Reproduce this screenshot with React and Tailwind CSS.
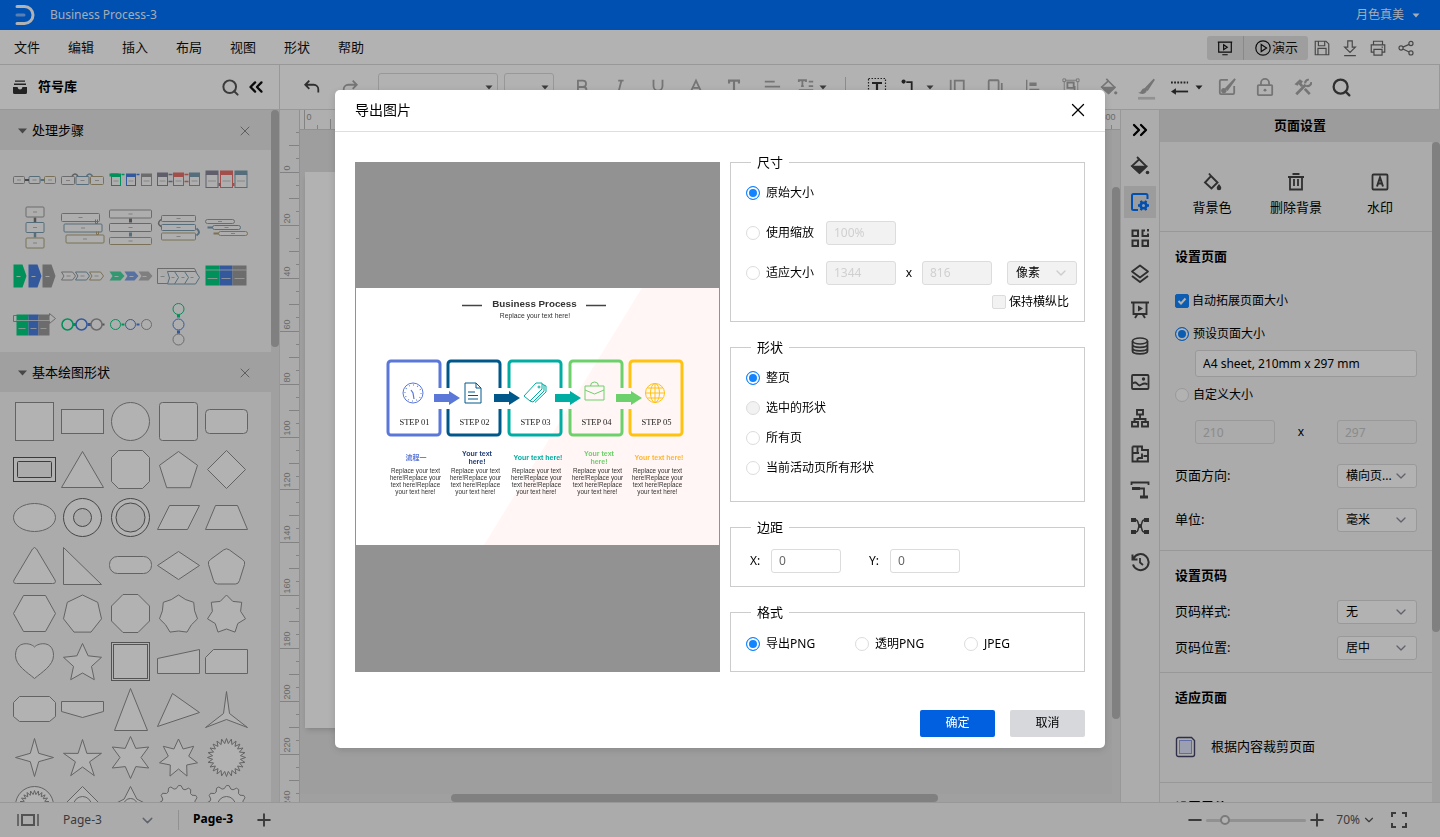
import { useState } from "react";
import { ChevronDown, ChevronsLeft, ChevronsRight, Search, X, Plus, Minus } from "lucide-react";

/* ---------- shape helpers ---------- */

const radial = (radii, cx = 24, cy = 24) =>
  radii
    .map((r, i) => {
      const a = (Math.PI * 2 * i) / radii.length - Math.PI / 2;
      return `${(cx + r * Math.cos(a)).toFixed(1)},${(cy + r * Math.sin(a)).toFixed(1)}`;
    })
    .join(" ");

const regular = (n, r, cy) => radial(Array(n).fill(r), 24, cy);

const star = (n, outer, inner, cy) =>
  radial(Array.from({ length: n * 2 }, (_, i) => (i % 2 ? inner : outer)), 24, cy);

const P = (points) => <polygon points={points} />;

const gear = radial(
  Array.from({ length: 48 }, (_, i) => (i % 4 < 2 ? 20 : 17))
);

const BASIC_SHAPES = [
  <rect x="5" y="5" width="38" height="38" />,
  <rect x="3" y="12" width="42" height="24" />,
  <circle cx="24" cy="24" r="19" />,
  <rect x="5" y="5" width="38" height="38" rx="3" />,
  <rect x="3" y="12" width="42" height="24" rx="4" />,

  <g stroke="#555"><rect x="3" y="12" width="42" height="24" /><rect x="7" y="16" width="34" height="16" rx="1" fill="#f5f5f5" /></g>,
  P("24,6 45,42 3,42"),
  P("12,5 36,5 43,12 43,36 36,43 12,43 5,36 5,12"),
  P(regular(5, 20, 26)),
  P("24,5 43,24 24,43 5,24"),

  <ellipse cx="24" cy="24" rx="21" ry="14" />,
  <g stroke="#666"><circle cx="24" cy="24" r="19" /><circle cx="24" cy="24" r="9" fill="#f5f5f5" /></g>,
  <g stroke="#666"><circle cx="24" cy="24" r="19" /><circle cx="24" cy="24" r="14.5" fill="#f5f5f5" /></g>,
  P("3,36 15,12 45,12 33,36"),
  P("3,36 13,12 35,12 45,36"),

  <path d="M22 7.500Q24 4.500 26 7.500L44.500 38.500Q46 42 42 42H6Q2 42 3.500 38.500Z" />,
  P("5,6 5,43 43,43"),
  <rect x="3" y="15" width="42" height="17" rx="8" />,
  P("24,10 45,24 24,38 3,24"),
  <path d="M21 8.500Q24 6 27 8.500L40 18Q43 20 42 23L37 39Q36 42.500 33 42.500H15Q12 42.500 11 39L6 23Q5 20 8 18Z" />,

  P("13,6 35,6 45,24 35,42 13,42 3,24"),
  P(regular(7, 19.5, 25)),
  P("16.500,5 31.500,5 43,16.500 43,31.500 31.500,43 16.500,43 5,31.500 5,16.500"),
  P(star(7, 19.5, 16.5, 25)),
  P(star(7, 19.5, 14.5, 25)),

  <path d="M24 9.500C28 5 43 3 43 18C43 28 31 35 24 41C17 35 5 28 5 18C5 3 20 5 24 9.500Z" />,
  P(star(5, 20, 9.5, 26)),
  <g stroke="#777"><rect x="5" y="5" width="38" height="38" /><rect x="7" y="7" width="34" height="34" /></g>,
  P("3,21 45,12 45,36 3,36"),
  P("3,20 11,12 45,12 45,36 3,36"),

  P("9,11 39,11 45,17 45,31 39,36 9,36 3,31 3,17"),
  P("3,16 45,16 45,26 24,32 3,26"),
  P("24,3 41,45 8,45"),
  P("18,8 45,27 3,41"),
  P("24,6 27,28 45,42 24,34 3,42 21,28"),

  P(star(4, 19, 6, 24)),
  P(star(5, 20, 7.5, 26)),
  P(star(6, 21, 10.5, 24)),
  P(star(7, 19.5, 10.5, 25)),
  P(star(24, 19, 14, 24)),

  <g><circle cx="24" cy="24" r="19" />{P(star(24, 15, 11, 24))}</g>,
  <g>{P("24,5 43,24 24,43 5,24")}<circle cx="24" cy="24" r="9" /></g>,
  <g>{P(star(4, 19, 9, 24))}<circle cx="24" cy="24" r="7" /></g>,
  P(gear),
  <g>{P(gear)}<circle cx="24" cy="24" r="9" /></g>,
];

const GREEN = "#00cf80";
const BLUE = "#4a80e0";
const GREY = "#9b9b9b";
const TEAL = "#7b9db0";
const SAND = "#b0a37b";
const PLUM = "#8c879b";
const RED = "#e8706c";

const Box = ({ x, y, w, h, c = GREY, rx = 1 }) => (
  <g>
    <rect x={x} y={y} width={w} height={h} rx={rx} stroke={c} fill="#fafafa" />
    <path d={`M${x + w / 2 - 2} ${y + h / 2}h4`} stroke="#999" strokeWidth="0.7" />
  </g>
);

const Card = ({ x, y, w, head, h, c, body = c }) => (
  <g>
    <rect x={x} y={y + head} width={w} height={h} stroke={body} fill="#fafafa" />
    <rect x={x - 0.5} y={y} width={w + 1} height={head} fill={c} />
    <path d={`M${x + 2} ${y + head + h / 2}h${w - 4}`} stroke="#aaa" strokeWidth="0.7" />
  </g>
);

const STEP_SHAPES = [
  <g><Box x={3} y={20} w={11} h={7} /><Box x={18.5} y={20} w={11} h={7} c={TEAL} /><Box x={34} y={20} w={11} h={7} c={SAND} /><path d="M14.500 23.500h4" stroke="#666" strokeWidth="2" /><path d="M30 23.500h4" stroke={TEAL} strokeWidth="2" /></g>,
  <g><path d="M14 21v-2q2.500-3 5 0v2" stroke="#888" strokeWidth="1.500" /><path d="M28.500 21v-2q2.500-3 5 0v2" stroke={TEAL} strokeWidth="1.500" /><Box x={3} y={20} w={13} h={8} /><Box x={17.500} y={20} w={13} h={8} c={TEAL} /><Box x={32} y={20} w={13} h={8} c={SAND} /></g>,
  <g><Card x={5} y={17} w={9} head={3} h={9} c={GREEN} /><Card x={20} y={17} w={9} head={3} h={9} c={BLUE} /><Card x={35} y={17} w={10} head={3} h={9} c={GREY} /><path d="M3 18.500h9" stroke={GREEN} strokeWidth="3" /><path d="M15 18h3" stroke={GREEN} strokeWidth="1.500" /><path d="M30 18h3" stroke={BLUE} strokeWidth="1.500" /></g>,
  <g><Card x={3} y={16} w={10} head={4} h={9} c={PLUM} /><Card x={19} y={16} w={10} head={4} h={9} c={RED} /><Card x={35} y={16} w={10} head={4} h={9} c={TEAL} /><path d="M14 18h4M14 25h4" stroke={PLUM} strokeWidth="1.500" /><path d="M30 18h4M30 25h4" stroke={RED} strokeWidth="1.500" /></g>,
  <g><Card x={3.500} y={14} w={12} head={4} h={13} c={PLUM} /><Card x={18} y={14} w={12} head={4} h={13} c={RED} /><Card x={32.500} y={14} w={12} head={4} h={13} c={TEAL} /><path d="M16 28h2" stroke={PLUM} strokeWidth="3" /><path d="M30 28h2" stroke={RED} strokeWidth="3" /></g>,

  <g><path d="M24.500 13v5" stroke="#777" strokeWidth="2.500" /><path d="M24.500 28v5" stroke={TEAL} strokeWidth="2.500" /><Box x={15.500} y={2.500} w={18} h={10} /><Box x={15.500} y={18} w={18} h={10} c={TEAL} /><Box x={15.500} y={33.500} w={18} h={10} c={SAND} /></g>,
  <g><Box x={3} y={9} w={38} h={8} /><Box x={5.500} y={19.500} w={38} h={8} c={TEAL} /><Box x={7.500} y={30.500} w={38} h={8} c={SAND} /><path d="M37 15v4h2v-4" stroke={TEAL} /><path d="M38 27v3h2v-3" stroke={SAND} /></g>,
  <g><Box x={3} y={5.500} w={42} h={8} /><Box x={3} y={19} w={42} h={8} c={TEAL} /><Box x={3} y={33} w={42} h={7} c={SAND} /><path d="M24 14v4" stroke="#777" strokeWidth="3" /><path d="M24 28v4" stroke={TEAL} strokeWidth="3" /></g>,
  <g><Box x={7} y={11} w={34} h={6} /><Box x={7} y={20} w={34} h={6} c={TEAL} /><Box x={7} y={28.500} w={34} h={7} c={SAND} /><path d="M6.500 15q-5 4 0 7" stroke="#888" strokeWidth="1.500" /><path d="M42 24q5 4 0 7" stroke={TEAL} strokeWidth="2" /></g>,
  <g><Box x={3} y={15} w={29} h={4} rx={2} /><Box x={10} y={21} w={28} h={4} c={TEAL} rx={2} /><Box x={16} y={27} w={29} h={4} c={SAND} rx={2} /><path d="M5 23h5" stroke={TEAL} strokeWidth="2" /><path d="M11 29h5" stroke={SAND} strokeWidth="2" /></g>,

  <g><path d="M3 12h9l4 11.500-4 11.500H3z" fill={GREEN} /><path d="M18 12h9l4 11.500-4 11.500h-9z" fill={BLUE} /><path d="M32 12h9l4 11.500-4 11.500h-9z" fill={GREY} /><path d="M6 24h4M21 24h4M35 24h4" stroke="#fff" strokeWidth="0.800" /></g>,
  <g fill="#fafafa"><path d="M3 19.500h11l3 4-3 4H3l2.500-4z" stroke={GREY} /><path d="M17 19.500h11l3 4-3 4H17l2.500-4z" stroke={TEAL} /><path d="M31 19.500h11l3 4-3 4H31l2.500-4z" stroke={SAND} /><path d="M8 23.500h4M22 23.500h4M36 23.500h4" stroke="#999" strokeWidth="0.700" /></g>,
  <g><path d="M3 19h11l4 4.500-4 4.500H3l3-4.500z" fill={GREEN} fillOpacity="0.700" /><path d="M18 19h10l4 4.500-4 4.500H18l3-4.500z" fill={BLUE} fillOpacity="0.700" /><path d="M32 19h10l4 4.500-4 4.500H32l3-4.500z" fill={GREY} fillOpacity="0.700" /><path d="M8 24h4M23 24h4M36 24h4" stroke="#fff" strokeWidth="0.800" /></g>,
  <g fill="#fafafa"><path d="M3 16h37l2 4" stroke={GREY} /><path d="M3 16v15h10" stroke={GREY} /><path d="M13 19h28l4 6-4 6.500H13l2-6z" stroke={TEAL} /><path d="M20 19l4 6-4 6.500M30 19l4 6-4 6.500" stroke={TEAL} /><path d="M6 24h4M17 25h3M27 25h3M36 25h3" stroke="#999" strokeWidth="0.700" /></g>,
  <g><path d="M3 13h14v20H3z" fill={GREEN} /><path d="M17 13h13v20H17z" fill={BLUE} /><path d="M30 13h14v20H30z" fill={GREY} /><path d="M3 17.500h41M5 26h10M19 26h9M32 26h10" stroke="#e4e4e4" strokeWidth="0.800" /></g>,

  <g><path d="M3 15h36v-2l6 5-6 5v-2H3z" stroke={GREY} fill="#fafafa" /><path d="M6 14h12v21H6z" fill={GREEN} /><path d="M18 14h10v21H18z" fill={BLUE} /><path d="M28 14h11v21H28z" fill={GREY} /><path d="M6 20h33M8 28h7M20 28h6M30 28h6" stroke="#e4e4e4" strokeWidth="0.800" /></g>,
  <g strokeWidth="1.500"><path d="M14 24h4" stroke={GREEN} strokeWidth="3" /><path d="M29 24h4" stroke={BLUE} strokeWidth="3" /><path d="M43 24h3" stroke="#777" strokeWidth="2" /><circle cx="9" cy="24" r="5.500" stroke={GREEN} fill="#fafafa" /><circle cx="23" cy="24" r="5.500" stroke={BLUE} fill="#fafafa" /><circle cx="38" cy="24" r="5.500" stroke={GREY} fill="#fafafa" /></g>,
  <g><circle cx="9" cy="24" r="5" stroke={GREEN} fill="#fafafa" /><circle cx="24" cy="24" r="5" stroke={BLUE} fill="#fafafa" /><circle cx="40" cy="24" r="5" stroke={GREY} fill="#fafafa" /><path d="M15 24h3" stroke={GREEN} strokeWidth="2" /><path d="M30 24h3" stroke={BLUE} strokeWidth="2" /></g>,
  <g><circle cx="24" cy="8.500" r="5.500" stroke={GREEN} fill="#fafafa" /><circle cx="24" cy="24" r="5.500" stroke={BLUE} fill="#fafafa" /><circle cx="24" cy="39" r="5.500" stroke={GREY} fill="#fafafa" /><path d="M24 14v3" stroke={GREEN} strokeWidth="3" /><path d="M24 30v3" stroke={BLUE} strokeWidth="3" /></g>,
];

/* ---------- icons ---------- */

const Icon = ({ size = 20, className = "", children, sw = 1.6 }) => (
  <svg width={size} height={size} viewBox="0 0 20 20" fill="none" stroke="currentColor" strokeWidth={sw} className={`shrink-0 ${className}`}>
    {children}
  </svg>
);

const Caret = ({ className = "" }) => (
  <svg width="8" height="5" viewBox="0 0 8 5" className={`shrink-0 ${className}`}>
    <path d="M0.500 0.500h7L4 4.500z" fill="currentColor" />
  </svg>
);

const bucket = (
  <>
    <path d="M7 1l2.500 2.500M9 3l7.500 7.500-7 6.500L2 10 9 3.500" strokeWidth="1.800" />
    <path d="M2.500 10.500h13.500l-6.500 6.500z" fill="currentColor" />
    <circle cx="17.500" cy="16.500" r="1.800" fill="currentColor" stroke="none" />
  </>
);

const TOOLS_LEFT = [
  { name: "加粗", d: <path d="M5.500 3h5.500a3.300 3.300 0 0 1 0 7H5.500zM5.500 10h6a3.400 3.400 0 0 1 0 7H5.500z" strokeWidth="2" /> },
  { name: "斜体", d: <path d="M8 3h6M5 17h6M11.500 3l-3.500 14" strokeWidth="2" /> },
  { name: "下划线", d: <path d="M5 2v7a5 5 0 0 0 10 0V2M3.500 18h13" strokeWidth="2" /> },
  { name: "字体颜色", d: <path d="M4.500 14.500L10 3l5.500 11.500M6.500 11h7M3 18h14" strokeWidth="2" /> },
  { name: "文字", d: <path d="M4.500 6V3h11v3M10 3v12M7.500 15h5" strokeWidth="2.400" /> },
  { name: "对齐", d: <path d="M2 4h11M2 9.500h17M2 15h11" strokeWidth="2" /> },
];

const TOOLS_RIGHT = [
  { name: "分布", d: <><path d="M3 2v16" strokeWidth="2" /><path d="M7.500 3h10v13h-10z" strokeWidth="2" /></> },
  { name: "图层", d: <><rect x="3" y="2.500" width="11" height="12" rx="1" strokeWidth="2" /><path d="M17.500 5.500v12H7" strokeWidth="2" /></> },
  { name: "对齐形状", d: <><path d="M3 2v16" strokeWidth="1.500" /><path d="M6 7h8M6 14h11" strokeWidth="4" /></> },
  { name: "组合", d: <><path d="M2.500 2.500h15v15h-15z" strokeWidth="1" /><path d="M1 1h3v3H1zM16 1h3v3h-3zM1 16h3v3H1zM16 16h3v3h-3z" strokeWidth="1" fill="#fff" /><path d="M6 5h7v6H6zM14 9v5H9" strokeWidth="2" /></> },
  { name: "填充", d: bucket },
  { name: "线条颜色", d: <><path d="M18 1.500L8.500 11.500M18 1.500l-7.500 11.500-2-1.500z" strokeWidth="2" /><path d="M7.500 12c-4 0-2 3.500-5 4.500 3 1 6.500 0 6.500-3z" fill="currentColor" strokeWidth="1.500" /><path d="M0 22.500h19" stroke="#d0d0d0" strokeWidth="3" /></> },
];

const SIDE_ICONS = [
  { name: "填充样式", d: bucket },
  { name: "页面设置", active: true, d: <><path d="M8 18H3.500A1.500 1.500 0 0 1 2 16.500v-13A1.500 1.500 0 0 1 3.500 2H16a1.500 1.500 0 0 1 1.500 1.500V7" strokeWidth="2" /><circle cx="13.500" cy="13.500" r="2.800" strokeWidth="2.600" /><path d="M8 13.500h2.500M16.500 13.500H19M10.800 8.800l1.200 2.200M15 16l1.200 2.200M16.200 8.800L15 11M12 16l-1.200 2.200" strokeWidth="2.400" /></> },
  { name: "符号", d: <><path d="M2.500 2.500h5.500v5.500H2.500zM2.500 12.500h5.500V18H2.500zM12.500 12.500H18V18h-5.500zM15 2.500h-2.500v5.500H18V5.500M18 1v2.500" strokeWidth="2" /></> },
  { name: "图层", d: <><path d="M10 1.500l8 6-8 6-8-6z" strokeLinejoin="round" strokeWidth="1.800" /><path d="M2 12l8 6 8-6" strokeLinejoin="round" strokeWidth="2" /></> },
  { name: "演示", d: <><path d="M1 2.500h18M3.500 3v11h13V3M7.500 14l-2.500 4M12.500 14l2.500 4" strokeWidth="1.900" /><path d="M8 5.500l5 3-5 3z" fill="currentColor" stroke="none" /></> },
  { name: "数据", d: <><ellipse cx="10" cy="5" rx="7.500" ry="3" /><path d="M2.500 5v10c0 3.800 15 3.800 15 0V5M2.500 8.500c0 3.800 15 3.800 15 0M2.500 12c0 3.800 15 3.800 15 0" strokeWidth="1.800" /></> },
  { name: "图片", d: <><rect x="2" y="3" width="16.500" height="14" rx="1" strokeWidth="1.800" /><path d="M3 11.500c3-3 4 1 6.500 2 2 0 4-4 8-1" strokeWidth="1.800" /><circle cx="13.500" cy="7" r="1.700" fill="currentColor" stroke="none" /></> },
  { name: "组织结构", d: <><path d="M7 2h6v4.500H7zM2 14h6v4.500H2zM12 14h6v4.500h-6zM10 7v4M4.500 14v-3h11v3" strokeWidth="1.900" /></> },
  { name: "平面图", d: <path d="M7.500 8V3M2.500 2.500v15h15.500V6H12V2.500H2.500M2 9h7M12 9.500V14H7.500M13.500 12H18M7.500 14v3" strokeWidth="1.900" /> },
  { name: "甘特图", d: <><path d="M1.500 5V2.500h17V5" strokeWidth="1.800" /><path d="M2 8.500h8M10 17h8" strokeWidth="3" /><path d="M9 8.500h5V17" strokeWidth="1.800" /></> },
  { name: "思维导图", d: <><path d="M4 4h2c3 0 1.500 6 4 6s1-6 4-6h2M4 16h2c3 0 1.500-6 4-6s1 6 4 6h2" strokeWidth="1.500" /><path d="M1 4h5M14 4h5M1 16h5M14 16h5" strokeWidth="4" /><circle cx="10" cy="10" r="2" fill="currentColor" stroke="none" /></> },
  { name: "历史", d: <><path d="M3.500 6.500a8 8 0 1 1-.500 6M2.500 2.500v5h5" strokeWidth="2" /><path d="M10 6v4.500l3 2.500" strokeWidth="1.800" /></> },
];

/* ---------- small controls ---------- */

const Radio = ({ name, label, checked, disabled, className = "" }) => (
  <label className={`flex items-center text-xs text-black ${className}`}>
    <input
      type="radio"
      name={name}
      defaultChecked={checked}
      disabled={disabled}
      className="appearance-none w-3.5 h-3.5 shrink-0 rounded-full border border-[#dcdcdc] bg-white checked:border-[#1284ff] checked:bg-[#1284ff] checked:shadow-[inset_0_0_0_2px_#fff] disabled:bg-[#f2f2f2]"
    />
    {label}
  </label>
);

const Checkbox = ({ label, checked, disabled }) => (
  <label className="flex items-center gap-[3px] text-xs text-black">
    <span className="relative flex">
      <input
        type="checkbox"
        defaultChecked={checked}
        disabled={disabled}
        className="peer appearance-none w-3.5 h-3.5 rounded-xs border border-[#dcdcdc] bg-white checked:bg-[#1284ff] checked:border-[#1284ff] disabled:bg-[#f2f2f2]"
      />
      <svg viewBox="0 0 14 14" className="absolute inset-0 hidden peer-checked:block pointer-events-none" fill="none" stroke="#fff" strokeWidth="2">
        <path d="M3.500 7l2.500 2.500L10.500 4.500" />
      </svg>
    </span>
    {label}
  </label>
);

const TextBox = ({ label, value, disabled, className }) => (
  <input
    type="text"
    aria-label={label}
    defaultValue={value}
    disabled={disabled}
    className={`rounded-[3px] border border-[#dcdcdc] px-[7px] text-xs outline-none ${className}`}
  />
);

const Select = ({ id, label, value, disabled, className }) => (
  <span className={`relative flex items-center ${className}`}>
    <select
      id={id}
      aria-label={label}
      disabled={disabled}
      className="appearance-none w-full h-full rounded-[3px] border border-[#dcdcdc] bg-white pl-2 pr-6 text-xs text-black opacity-100 outline-none disabled:bg-[#f2f2f2]"
    >
      <option>{value}</option>
    </select>
    <ChevronDown size={16} strokeWidth={2} className={`absolute right-2 pointer-events-none ${disabled ? "text-[#ccc]" : "text-[#8a8f9c]"}`} />
  </span>
);

/* ---------- top bars ---------- */

const TitleBar = () => (
  <header className="flex items-center h-[30px] shrink-0 bg-[#0073ff] pl-[14px] pr-5 text-white/95">
    <svg width="22" height="22" viewBox="0 0 22 22" fill="none" strokeLinecap="round" className="mr-3.5">
      <path d="M3 2.500h7.500a8.500 8.500 0 0 1 0 17H3" stroke="#fff" strokeWidth="3" />
      <path d="M3 11h7" stroke="#82b8ff" strokeWidth="3" />
    </svg>
    <h1 className="text-xs">Business Process-3</h1>
    <button className="ml-auto flex items-center gap-2 text-xs">
      月色真美
      <Caret />
    </button>
  </header>
);

const MENU = ["文件", "编辑", "插入", "布局", "视图", "形状", "帮助"];

const MenuBar = () => (
  <nav className="flex items-center h-[35px] shrink-0 pt-px bg-white border-b border-[#dadada] text-[13px] text-[#111]">
    {MENU.map((m) => (
      <button key={m} className="px-3.5">{m}</button>
    ))}
    <div className="ml-auto flex items-center pr-5 text-[#666]">
      <div className="flex h-6 rounded-[3px] bg-[#e2e2e2] text-[#111]">
        <button aria-label="幻灯片" className="flex items-center justify-center w-[37px] border-r border-[#c4c4c4]">
          <Icon size={18} sw={1.3}><path d="M2 3.500h16M3 4v10.500h14V4M7 17.500h6" /><path d="M8.500 6.500l4 2.700-4 2.700z" /></Icon>
        </button>
        <button className="flex items-center justify-center w-[64px] text-[13px]">
          <Icon size={18} sw={1.3}><circle cx="10" cy="10" r="8" /><path d="M8 6l6 4-6 4z" /></Icon>
          演示
        </button>
      </div>
      <button aria-label="保存" className="flex justify-center w-7">
        <Icon size={18} sw={1.3}><path d="M2.500 2.500h12l3 3v12h-15zM6 2.500v5h7v-5M5.500 17.500v-7h9v7" /></Icon>
      </button>
      <button aria-label="下载" className="flex justify-center w-7">
        <Icon size={18} sw={1.3}><path d="M7.500 2h5v7h3.500l-6 6-6-6h3.500zM3.500 18.500h13" /></Icon>
      </button>
      <button aria-label="打印" className="flex justify-center w-7">
        <Icon size={18} sw={1.3}><path d="M5 6V2.500h10V6M5 14.500H2.500V6.500h15v8H15M5.500 11.500h9v6.500h-9zM14 9h1.500" /></Icon>
      </button>
      <button aria-label="分享" className="flex justify-center w-7">
        <Icon size={18} sw={1.3}><circle cx="4.500" cy="10" r="2.300" /><circle cx="15.500" cy="5" r="2.300" /><circle cx="15.500" cy="15.500" r="2.300" /><path d="M6.500 9l7-3M6.500 11l7 3.500" /></Icon>
      </button>
    </div>
  </nav>
);

const ToolBar = () => (
  <div className="flex h-[45px] shrink-0 bg-white border-b border-[#dadada]">
    <div className="flex items-center w-[280px] shrink-0 border-r border-[#dadada] pl-3 pr-3">
      <svg width="16" height="16" viewBox="0 0 16 16" className="text-[#333]" fill="currentColor">
        <path d="M3 1.500h10v1.300H3zM2 4.500h12v1.500H2z" />
        <path d="M1 8h4.500q.500 2.500 2.500 2.500T10.500 8H15v5.500q0 1.500-1.500 1.500h-11Q1 15 1 13.500z" />
      </svg>
      <h2 className="ml-2.5 text-[13px] font-bold text-black">符号库</h2>
      <button aria-label="搜索符号" className="ml-auto text-[#555]"><Search size={19} strokeWidth={2.500} /></button>
      <button aria-label="收起" className="ml-[5px] text-[#111]"><ChevronsLeft size={22} strokeWidth={2.500} /></button>
    </div>
    <div className="flex flex-1 min-w-0 items-center pl-[13px] text-[#a8a8a8] border-r border-[#dadada]">
      <button aria-label="撤销" className="flex justify-center w-[38px] text-[#444]">
        <Icon size={18} sw={2}><path d="M7 3L2.500 7.500 7 12M3 7.500h9a5 5 0 0 1 5 5V16" /></Icon>
      </button>
      <button aria-label="重做" className="flex justify-center w-[38px]">
        <Icon size={18} sw={2}><path d="M13 3l4.500 4.500L13 12M17 7.500H8a5 5 0 0 0-5 5V16" /></Icon>
      </button>
      <button aria-label="字体" className="flex items-center justify-end w-[120px] h-7 ml-[9px] mr-1.5 pr-1 rounded-[3px] border border-[#dadada] text-[#555]"><Caret /></button>
      <button aria-label="字号" className="flex items-center justify-end w-[50px] h-7 mr-[9px] pr-1 rounded-[3px] border border-[#dadada] text-[#555]"><Caret /></button>
      {TOOLS_LEFT.map((t) => (
        <button key={t.name} aria-label={t.name} className="flex justify-center w-[38px]"><Icon size={18}>{t.d}</Icon></button>
      ))}
      <button aria-label="行距" className="flex items-center justify-center w-[42px] gap-1">
        <Icon size={18} sw={2}><path d="M2 4.500V2.500h8v2M6 2.500v7M4.500 9h3M13 4h5M13 9h5M2 13.500h16M2 17.500h16" /></Icon>
        <Caret className="text-[#555]" />
      </button>
      <span className="w-px h-5 mx-3 bg-[#c8c8c8]" />
      <button aria-label="文本框" className="flex justify-center w-[38px] text-[#333]">
        <Icon size={20} sw={2.200}><rect x="1.500" y="1.500" width="17" height="17" strokeDasharray="1.500 1.500" strokeWidth="1.200" /><path d="M5 6h10M10 6v9" /></Icon>
      </button>
      <button aria-label="连接线" className="flex items-center justify-center w-[42px] gap-2 text-[#333]">
        <Icon size={18} sw={2}><circle cx="4" cy="4" r="2.300" fill="currentColor" stroke="none" /><path d="M7 4.500h6v11h4" /></Icon>
        <Caret className="text-[#555]" />
      </button>
      {TOOLS_RIGHT.map((t) => (
        <button key={t.name} aria-label={t.name} className="flex justify-center w-[38px]"><Icon size={18} className="overflow-visible">{t.d}</Icon></button>
      ))}
      <button aria-label="线型" className="flex items-center justify-center w-[42px] gap-1.5 text-[#333]">
        <Icon size={18} className="overflow-visible"><path d="M0 5h19" strokeDasharray="2 1.500" strokeWidth="2" /><path d="M4 15h15" strokeWidth="2" /><path d="M5.500 11.500v7L0 15z" fill="currentColor" stroke="none" /></Icon>
        <Caret />
      </button>
      <button aria-label="编辑样式" className="flex justify-center w-[38px]">
        <Icon size={18} sw={2}><path d="M11 2H3.500A1.500 1.500 0 0 0 2 3.500v13A1.500 1.500 0 0 0 3.500 18h13a1.500 1.500 0 0 0 1.500-1.500V9" /><path d="M19 1L9 11.500l1.500 1.500z" fill="currentColor" /><circle cx="6.500" cy="14" r="3" fill="currentColor" stroke="none" /></Icon>
      </button>
      <button aria-label="锁定" className="flex justify-center w-[38px]">
        <Icon size={18} sw={2}><rect x="2" y="8" width="16" height="11" rx="1" /><path d="M5.500 8V5.500a4.500 4.500 0 0 1 9 0V8" /><circle cx="10" cy="13.500" r="1.600" fill="currentColor" stroke="none" /></Icon>
      </button>
      <button aria-label="工具" className="flex justify-center w-[38px]">
        <Icon size={18} sw={3}><path d="M2.500 18L13 7.500M6 5.500L9 9M12 12l5.500 6" /><path d="M0.500 7l6-5.500L10 4 8 6 6.500 5 4 8.500z" fill="currentColor" stroke="none" /><path d="M12.500 6a3.500 3.500 0 0 1 4-4M19 4.500a3.800 3.800 0 0 1-5.500 4" strokeWidth="2.400" /></Icon>
      </button>
      <button aria-label="搜索" className="flex justify-center w-[38px] text-[#444]"><Search size={21} strokeWidth={2.600} /></button>
    </div>
  </div>
);

/* ---------- left library ---------- */

const ShapeGroup = ({ title, shapes, className, stroke }) => (
  <section>
    <div className="flex items-center h-10 pt-px bg-[#e5e5e5] pl-[18px] pr-[18px] text-[13px] text-black">
      <svg width="9" height="6" viewBox="0 0 9 6" className="mr-[5px] text-[#666]"><path d="M0 0.500h9L4.500 5.500z" fill="currentColor" /></svg>
      <h3>{title}</h3>
      <button aria-label="关闭" className="ml-auto text-[#888]"><X size={16} strokeWidth={1.500} /></button>
    </div>
    <div className={`flex flex-wrap pl-2.5 ${className}`}>
      {shapes.map((s, i) => (
        <svg key={i} viewBox="-0.5 -0.5 48 48" className="w-12 h-12" fill={stroke ? "#fff" : "none"} stroke={stroke} strokeWidth="1">{s}</svg>
      ))}
    </div>
  </section>
);

const Library = () => (
  <aside className="flex w-[280px] shrink-0 border-r border-[#dadada] bg-[#f5f5f5]">
    <div className="flex-1 overflow-hidden">
      <ShapeGroup title="处理步骤" shapes={STEP_SHAPES} className="pt-1.5 pb-1" />
      <ShapeGroup title="基本绘图形状" shapes={BASIC_SHAPES} className="pt-[5px]" stroke="#8f8f8f" />
    </div>
    <div className="w-2 bg-[#e6e6e6]"><div className="h-[237px] rounded bg-[#b8b8b8]" /></div>
  </aside>
);

/* ---------- canvas ---------- */

const UNIT = 52.9;
const VRuler = () => (
  <svg width="20" height="692" className="shrink-0 h-full" fontFamily="Liberation Sans, Arial, sans-serif" fontSize="9" fill="#999">
    {Array.from({ length: 14 }, (_, i) => {
      const y = Math.round(62 + (i - 1) * UNIT) + 0.5;
      return (
        <g key={i} stroke="#bbb">
          {i > 0 && <path d={`M0 ${y}h20`} />}
          <path d={`M16 ${y + 13}h4M9 ${y + 26}h11M16 ${y + 39}h4`} />
          {i > 0 && <text stroke="none" transform={`translate(10 ${y - 2}) rotate(-90)`}>{(i - 1) * 20}</text>}
        </g>
      );
    })}
  </svg>
);

const HRuler = () => (
  <svg width="820" height="19" className="block" fontFamily="Liberation Sans, Arial, sans-serif" fontSize="9" fill="#999">
    {Array.from({ length: 16 }, (_, i) => {
      const x = Math.round(4 + i * UNIT) + 0.5;
      return (
        <g key={i} stroke="#bbb">
          <path d={`M${x} 0v19M${x + 13} 15v4M${x + 26} 9v10M${x + 39} 15v4`} />
          {i % 3 === 0 && <text x={x + 2} y="10" stroke="none">{i * 20}</text>}
        </g>
      );
    })}
  </svg>
);

const Canvas = () => (
  <main className="flex flex-1 min-w-0 overflow-hidden">
    <div className="w-5 shrink-0 overflow-hidden bg-[#f5f5f5] border-r border-[#d0d0d0]"><VRuler /></div>
    <div className="flex flex-col flex-1 min-w-0">
      <div className="h-5 shrink-0 overflow-hidden bg-[#fbfbfb] border-b border-[#d0d0d0]"><HRuler /></div>
      <div className="flex flex-1 min-h-0">
        <div className="flex-1 overflow-hidden bg-[#e3e3e3] pt-[42px] pl-[5px] pr-5">
          <div className="h-[556px] bg-white shadow-md" />
        </div>
        <div className="w-2 shrink-0 bg-[#e6e6e6] pt-[57px]"><div className="h-[532px] rounded bg-[#b8b8b8]" /></div>
      </div>
      <div className="h-2 shrink-0 bg-[#e6e6e6] pl-[151px]"><div className="w-[487px] h-2 rounded bg-[#b8b8b8]" /></div>
    </div>
  </main>
);

const SideStrip = () => (
  <div className="flex flex-col items-center gap-1 w-10 shrink-0 pt-1 bg-[#f7f7f7] border-x border-[#dadada] text-[#444]">
    <button aria-label="展开" className="flex items-center justify-center w-8 h-8 shrink-0 text-black"><ChevronsRight size={24} strokeWidth={2.300} /></button>
    {SIDE_ICONS.map((s) => (
      <button key={s.name} aria-label={s.name} className={`flex items-center justify-center w-8 h-8 shrink-0 ${s.active ? "bg-[#e0e0e0] text-[#0073ff]" : ""}`}>
        <Icon>{s.d}</Icon>
      </button>
    ))}
  </div>
);

/* ---------- right panel ---------- */

const PAGE_ACTIONS = [
  { name: "背景色", d: <><path d="M7 1.500l2 2.500M9 4l6.500 6.500-6 6L3 10.500z" strokeWidth="1.900" /><path d="M17 12c1.500 2 2.300 2.800 2.300 4a2.300 2.300 0 0 1-4.600 0c0-1.200.800-2 2.300-4z" fill="currentColor" stroke="none" /></> },
  { name: "删除背景", d: <path d="M6.500 2h7M2 5h16M4 5v12.500h12V5M8 7v7M12 7v7" strokeWidth="1.800" /> },
  { name: "水印", d: <><rect x="2.500" y="2.500" width="15" height="15" rx="1" strokeWidth="1.800" /><path d="M7 14.500l3-9 3 9M8 11.500h4" strokeWidth="2" /></> },
];

const Row = ({ id, label, value }) => (
  <div className="flex items-center justify-between h-6">
    <label htmlFor={id} className="text-[13px] text-black">{label}:</label>
    <Select id={id} value={value} className="w-20 h-6" />
  </div>
);

const PageSettings = () => (
  <aside className="flex flex-col w-[280px] shrink-0 bg-[#f5f5f5]">
    <h2 className="flex items-center justify-center h-8 shrink-0 bg-[#e0e0e0] text-[13px] font-bold text-black">页面设置</h2>
    <div className="flex flex-1 min-h-0">
      <div className="flex-1 overflow-hidden">
        <div className="flex h-[90px] px-2.5 pt-[30px] border-b border-[#dadada]">
          {PAGE_ACTIONS.map((a) => (
            <button key={a.name} className="flex flex-col items-center gap-[5px] flex-1 text-[13px] leading-5 text-black">
              <Icon className="text-[#444]">{a.d}</Icon>
              {a.name}
            </button>
          ))}
        </div>
        <section className="px-[15px] pt-3.5 pb-[18px] border-b border-[#dadada]">
          <h3 className="h-5 text-[13px] leading-5 font-bold text-black">设置页面</h3>
          <div className="flex items-center h-[34px] mt-[18px]"><Checkbox label="自动拓展页面大小" checked /></div>
          <Radio name="page-size" label="预设页面大小" checked className="gap-1 h-8" />
          <TextBox label="预设尺寸" value="A4 sheet, 210mm x 297 mm" className="block w-[222px] h-[27px] ml-5 bg-white text-black" />
          <Radio name="page-size" label="自定义大小" className="gap-1 h-9" />
          <div className="flex items-center pl-5 mt-[7px] text-xs text-black">
            <TextBox label="宽" value="210" disabled className="w-20 h-6 text-[#c8c8c8]" />
            <span className="w-[52px] text-center">x</span>
            <TextBox label="高" value="297" disabled className="w-20 h-6 ml-auto text-[#c8c8c8]" />
          </div>
          <div className="flex flex-col gap-5 mt-5">
            <Row id="page-dir" label="页面方向" value="横向页..." />
            <Row id="page-unit" label="单位" value="毫米" />
          </div>
        </section>
        <section className="px-[15px] pt-3.5 pb-3 border-b border-[#dadada]">
          <h3 className="h-5 text-[13px] leading-5 font-bold text-black">设置页码</h3>
          <div className="flex flex-col gap-3 mt-[15px]">
            <Row id="num-style" label="页码样式" value="无" />
            <Row id="num-pos" label="页码位置" value="居中" />
          </div>
        </section>
        <section className="px-[15px] pt-3.5 pb-[15px] border-b border-[#dadada]">
          <h3 className="h-5 text-[13px] leading-5 font-bold text-black">适应页面</h3>
          <button className="flex items-center gap-[15px] h-10 mt-5 text-[13px] text-black">
            <svg width="21" height="22" viewBox="0 0 21 22" fill="none">
              <path d="M3.500 1.500h13l3 3v14a2 2 0 0 1-2 2h-14a2 2 0 0 1-2-2v-15a2 2 0 0 1 2-2z" stroke="#44446a" strokeWidth="1.400" />
              <rect x="4.500" y="4.500" width="12" height="13" fill="#dfe4fb" stroke="#2a4be0" strokeDasharray="1 1" />
            </svg>
            根据内容裁剪页面
          </button>
        </section>
        <h3 className="px-[15px] pt-3.5 text-[13px] leading-5 font-bold text-black">设置零件</h3>
      </div>
      <div className="w-2 shrink-0 bg-[#e6e6e6]"><div className="h-[490px] rounded bg-[#b8b8b8]" /></div>
    </div>
  </aside>
);

/* ---------- footer ---------- */

const Footer = () => (
  <footer className="flex items-center h-[35px] shrink-0 bg-[#f5f5f5] border-t border-[#dadada] pl-4 pr-[31px] text-xs text-[#555]">
    <svg width="24" height="14" viewBox="0 0 24 14" fill="none" stroke="#777" className="mr-[23px]">
      <rect x="6" y="2" width="12" height="10" strokeWidth="2" /><path d="M2 1v12M22 1v12" strokeWidth="1.500" />
    </svg>
    <span className="w-[76px]">Page-3</span>
    <button aria-label="页面列表" className="text-[#8a8f9c]"><ChevronDown size={17} /></button>
    <span className="w-px h-5 ml-[22px] mr-3.5 bg-[#d0d0d0]" />
    <button className="font-bold text-black mb-0.5">Page-3</button>
    <button aria-label="新建页面" className="ml-[21px] text-[#555]"><Plus size={20} strokeWidth={2.300} /></button>
    <div className="ml-auto flex items-center">
      <button aria-label="缩小"><Minus size={20} strokeWidth={2.300} /></button>
      <input
        type="range"
        aria-label="缩放"
        defaultValue="15"
        className="appearance-none w-[100px] h-[3px] mx-px rounded bg-[#d0d0d0] [&::-webkit-slider-thumb]:appearance-none [&::-webkit-slider-thumb]:w-2.5 [&::-webkit-slider-thumb]:h-2.5 [&::-webkit-slider-thumb]:rounded-full [&::-webkit-slider-thumb]:border-2 [&::-webkit-slider-thumb]:border-[#b0b0b0] [&::-webkit-slider-thumb]:bg-white"
      />
      <button aria-label="放大"><Plus size={20} strokeWidth={2.300} /></button>
      <button className="flex items-center gap-0.5 ml-[9px]">70%<ChevronDown size={14} /></button>
      <button aria-label="全屏" className="ml-[13px]">
        <Icon size={20} sw={2}><path d="M3 7V3h4M13 3h4v4M17 13v4h-4M7 17H3v-4" /></Icon>
      </button>
    </div>
  </footer>
);

/* ---------- export dialog ---------- */

const STEPS = [
  { x: 32, color: "#5b78d8", title: ["流程一"] },
  { x: 92, color: "#00588a", title: ["Your text", "here!"], titleColor: "#24407c" },
  { x: 153, color: "#00ada2", title: ["Your text here!"] },
  { x: 214, color: "#6cd16a", title: ["Your text", "here!"] },
  { x: 274, color: "#ffc20e", title: ["Your text here!"], titleColor: "#ffb62e" },
];

const STEP_ICONS = [
  <g><circle cx="10" cy="10" r="10" /><circle cx="10" cy="10" r="8" strokeWidth="1.500" strokeDasharray="0.700 3.490" /><path d="M8 7l2 3 1 6" strokeWidth="1.200" /></g>,
  <g><path d="M2 0h11l5 5v15H2zM13 0v5h5M5 9h7M5 12.500h10M5 16h10" /></g>,
  <g><path d="M12 0h6v6L6 18l-6-5z" /><path d="M18 1l2 1v6L9 19l-3-1M20 2l2 1v6L11 19.500" /><circle cx="15" cy="4" r="1" /></g>,
  <g><path d="M0 3h19v14H0zM5.500 3q0-4 4-4t4 4M0 7l9.500 4L19 7" /></g>,
  <g><circle cx="10" cy="10" r="9.500" /><ellipse cx="10" cy="10" rx="4.500" ry="9.500" /><path d="M.500 10h19M10 .500v19M2.500 5h15M2.500 15h15" /></g>,
];

const BODY = ["Replace your text", "here!Replace your", "text here!Replace", "your text here!"];

const Preview = () => (
  <svg viewBox="0 0 363 257" className="w-full bg-white" fill="none" fontFamily="Liberation Sans, Arial, Noto Sans CJK SC, sans-serif">
    <path d="M286 0H363V257H128z" fill="#fff6f5" />
    <path d="M106 17.500h20M230 17.500h20" stroke="#444" strokeWidth="1.500" />
    <text x="178.500" y="19" textAnchor="middle" fontSize="9.800" fontWeight="bold" fill="#333">Business Process</text>
    <text x="179" y="30" textAnchor="middle" fontSize="6.800" fill="#333">Replace your text here!</text>
    {STEPS.map((s, i) => (
      <g key={i}>
        <path
          d={i === 0
            ? `M${s.x + 52} 100V76a3 3 0 0 0-3-3H${s.x + 3}a3 3 0 0 0-3 3V144a3 3 0 0 0 3 3H${s.x + 49}a3 3 0 0 0 3-3V121`
            : `M${s.x} 100V76a3 3 0 0 1 3-3H${s.x + 49}a3 3 0 0 1 3 3V${i === 4 ? 144 : 100}${i === 4 ? "" : `M${s.x + 52} 121V144`}a3 3 0 0 1-3 3H${s.x + 3}a3 3 0 0 1-3-3V121`}
          stroke={s.color}
          strokeWidth="3"
        />
        {i < 4 && <path d={`M${s.x + 46} 106h15v-3l11 7-11 7v-3h-15z`} fill={s.color} />}
        <g transform={`translate(${s.x + 15} 95)`} stroke={s.color}>{STEP_ICONS[i]}</g>
        <text x={s.x + 26.5} y="136.500" textAnchor="middle" fontSize="8.500" fontFamily="Liberation Serif, serif" fill="#222">STEP 0{i + 1}</text>
        {s.title.map((t, k) => (
          <text key={k} x={s.x + (i ? 29 : 28)} y={(s.title.length > 1 ? 168 : 172) + k * 7.5} textAnchor="middle" fontSize="7" fontWeight="bold" fill={s.titleColor || s.color}>{t}</text>
        ))}
        {BODY.map((t, k) => (
          <text key={k} x={s.x + 27.5} y={184.5 + k * 7.2} textAnchor="middle" fontSize="6.300" fill="#333">{t}</text>
        ))}
      </g>
    ))}
  </svg>
);

const Group = ({ title, className, children }) => (
  <fieldset className={`border border-[#ccc] pl-[15px] pr-[7px] ${className}`}>
    <legend className="ml-[5px] px-1.5 h-[21px] leading-5 text-[13px] text-black">{title}</legend>
    {children}
  </fieldset>
);

const ExportDialog = ({ onClose }) => (
  <div className="fixed inset-0 flex items-center justify-center bg-black/30">
    <div role="dialog" aria-labelledby="export-title" className="w-[770px] rounded-[5px] bg-white shadow-[0_2px_8px_rgba(0,0,0,0.15)]">
      <div className="flex items-center justify-between h-[42px] pl-5 pr-4 border-b border-[#dedede]">
        <h2 id="export-title" className="text-sm text-black">导出图片</h2>
        <button aria-label="关闭" onClick={onClose} className="text-black"><X size={22} strokeWidth={1.400} /></button>
      </div>
      <div className="flex gap-2.5 px-5 pt-5">
        <div className="flex items-center w-[365px] mt-2.5 px-px bg-[#929292]">
          <Preview />
        </div>
        <form className="flex flex-col flex-1 gap-[15px]">
          <Group title="尺寸" className="pb-2.5">
            <Radio name="size" label="原始大小" checked className="gap-1.5 h-10" />
            <div className="flex items-center h-10">
              <Radio name="size" label="使用缩放" className="gap-1.5 w-20" />
              <TextBox label="缩放比例" value="100%" disabled className="w-[70px] h-6 bg-[#f2f2f2] text-[#d0d0d0]" />
            </div>
            <div className="flex items-center h-10 text-xs text-black">
              <Radio name="size" label="适应大小" className="gap-1.5 w-20" />
              <TextBox label="宽度" value="1344" disabled className="w-[70px] h-6 bg-[#f2f2f2] text-[#d0d0d0]" />
              <span className="w-[26px] text-center">x</span>
              <TextBox label="高度" value="816" disabled className="w-[70px] h-6 bg-[#f2f2f2] text-[#d0d0d0]" />
              <Select label="单位" value="像素" disabled className="ml-auto w-[70px] h-6" />
            </div>
            <div className="flex justify-end h-[18px] pr-2">
              <Checkbox label="保持横纵比" disabled />
            </div>
          </Group>
          <Group title="形状" className="pt-[5px] pb-[18px]">
            <Radio name="scope" label="整页" checked className="gap-1.5 h-[30px]" />
            <Radio name="scope" label="选中的形状" disabled className="gap-1.5 h-[30px]" />
            <Radio name="scope" label="所有页" className="gap-1.5 h-[30px]" />
            <Radio name="scope" label="当前活动页所有形状" className="gap-1.5 h-[30px]" />
          </Group>
          <Group title="边距" className="pt-[11px] pb-[13px]">
            <div className="flex items-center pl-1 text-xs text-black">
              <label htmlFor="margin-x" className="w-[21px]">X:</label>
              <input id="margin-x" type="text" defaultValue="0" className="w-[70px] h-6 rounded-[3px] border border-[#dcdcdc] px-[7px] text-[#666] outline-none" />
              <label htmlFor="margin-y" className="w-[21px] ml-7">Y:</label>
              <input id="margin-y" type="text" defaultValue="0" className="w-[70px] h-6 rounded-[3px] border border-[#dcdcdc] px-[7px] text-[#666] outline-none" />
            </div>
          </Group>
          <Group title="格式" className="pt-[11px] pb-[17px]">
            <div className="flex h-5">
              <Radio name="format" label="导出PNG" checked className="gap-1.5 w-[109px]" />
              <Radio name="format" label="透明PNG" className="gap-1.5 w-[109px]" />
              <Radio name="format" label="JPEG" className="gap-1.5" />
            </div>
          </Group>
        </form>
      </div>
      <div className="flex justify-end gap-[15px] px-5 pt-[38px] pb-[11px] text-xs">
        <button className="w-[75px] h-[27px] rounded-[2px] bg-[#0060df] text-white">确定</button>
        <button onClick={onClose} className="w-[75px] h-[27px] rounded-[2px] bg-[#d7d8dc] text-black">取消</button>
      </div>
    </div>
  </div>
);

const App = () => {
  const [open, setOpen] = useState(true);

  return (
    <div className="flex flex-col h-screen overflow-hidden font-['Noto_Sans','Noto_Sans_CJK_SC',sans-serif]">
      <TitleBar />
      <MenuBar />
      <ToolBar />
      <div className="flex flex-1 min-h-0">
        <Library />
        <Canvas />
        <SideStrip />
        <PageSettings />
      </div>
      <Footer />
      {open && <ExportDialog onClose={() => setOpen(false)} />}
    </div>
  );
};

export default App;
